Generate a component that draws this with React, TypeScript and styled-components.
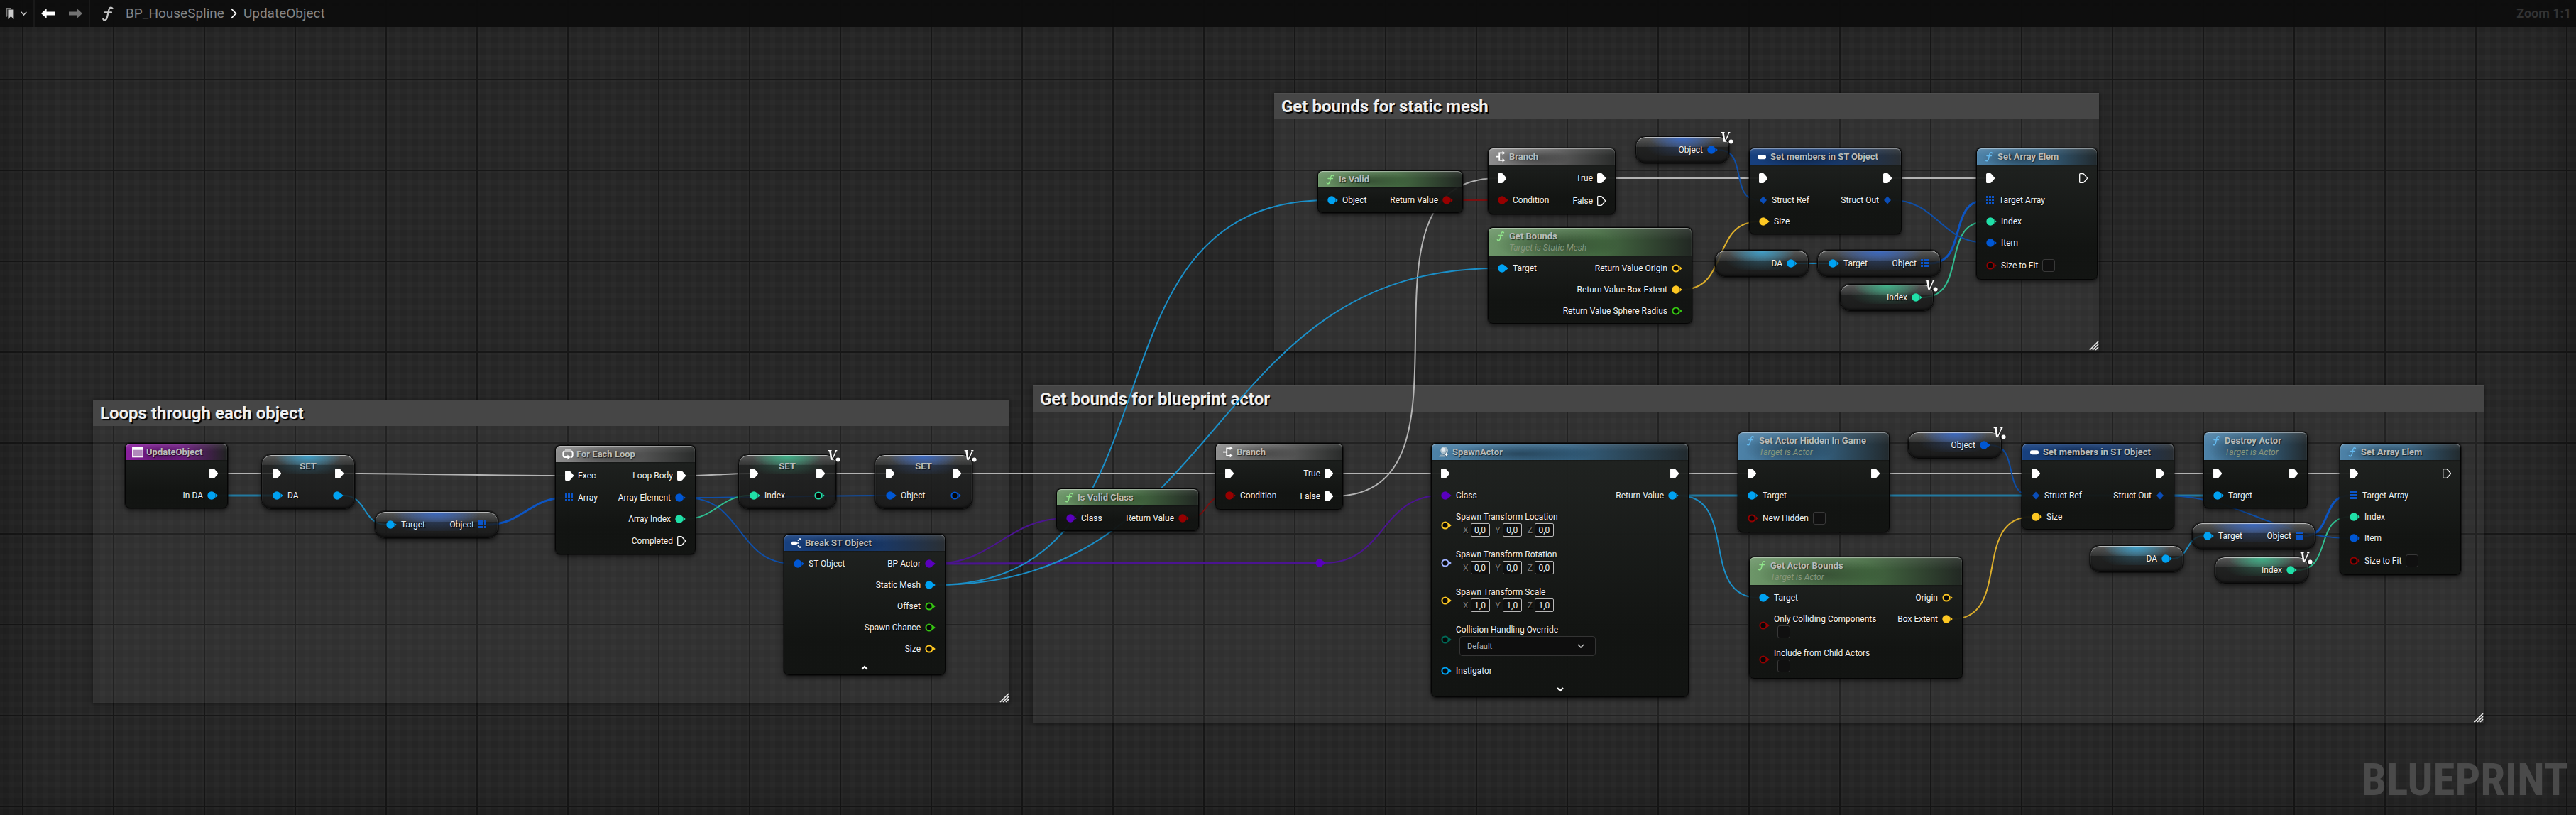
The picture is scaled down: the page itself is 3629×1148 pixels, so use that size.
import React, { useId } from 'react';
import styled, { createGlobalStyle, css } from 'styled-components';

/* ---------- palette ---------- */

const C = {
  exec: '#ffffff',
  object: '#00a2f2',
  struct: '#0057d4',
  cls: '#5a00bd',
  int: '#20e0a8',
  bool: '#960000',
  vector: '#fdc722',
  float: '#36c412',
  rotator: '#9fb2ff',
  enum: '#006a58',
};

type Theme = 'event' | 'gray' | 'blue' | 'func' | 'pure';

const themes: Record<Theme, { a: string; b: string; c: string; f: string }> = {
  event: { a: '#8a1f9e', b: '#6d1c80', c: '#202321', f: '#ffffff' },
  gray: { a: '#8e8e8e', b: '#5a5a5a', c: '#2a2c2b', f: '#ffffff' },
  blue: { a: '#17407f', b: '#17396d', c: '#2a2f34', f: '#ffffff' },
  func: { a: '#4d82a8', b: '#34607f', c: '#222a2e', f: '#63b9ee' },
  pure: { a: '#6d9669', b: '#456b42', c: '#222823', f: '#8fe58a' },
};

/* ---------- page ---------- */

const Global = createGlobalStyle`
  * { box-sizing: border-box; }
  body { margin: 0; background: #252525; font-family: Roboto, "Noto Sans", sans-serif; }
`;

const Page = styled.div`
  display: flex;
  flex-direction: column;
  min-height: 100vh;
  overflow: hidden;
  position: relative;
  background-color: #252525;
  background-image:
    linear-gradient(90deg, #171717 2px, transparent 2px),
    linear-gradient(#171717 2px, transparent 2px),
    linear-gradient(90deg, rgba(255, 255, 255, 0.012) 7px, transparent 7px),
    linear-gradient(rgba(255, 255, 255, 0.012) 7px, transparent 7px);
  background-size: 128px 128px, 128px 128px, 16px 16px, 16px 16px;
  background-position: 31px 0, 0 111px, 13px 0, 0 13px;
`;

const Toolbar = styled.header`
  display: flex;
  align-items: center;
  height: 38px;
  padding: 0 4px 0 8px;
  background: rgba(13, 13, 13, 0.94);
  position: relative;
  z-index: 3;
`;

const ToolGroup = styled.div`
  display: flex;
  gap: 20px;
`;

const ToolButton = styled.button<{ $w: number }>`
  display: flex;
  align-items: center;
  justify-content: center;
  gap: 9px;
  width: ${(p) => p.$w}px;
  height: 38px;
  padding: 0;
  border: 0;
  background: none;
`;

const Divider = styled.span`
  width: 2px;
  height: 38px;
  margin: 0 9px;
  background: #191919;
`;

const Crumbs = styled.nav`
  display: flex;
  align-items: center;
  gap: 9px;
  padding-left: 7px;
`;

const FunctionMark = styled.svg`
  width: 18px;
  height: 22px;
  margin-right: 7px;
`;

const Crumb = styled.a`
  font-size: 19px;
  line-height: 22px;
  color: #858585;
  text-decoration: none;
`;

const ZoomText = styled.span`
  margin-left: auto;
  padding-right: 3px;
  font-size: 18px;
  line-height: 22px;
  font-weight: 700;
  color: #333333;
`;

const Canvas = styled.main`
  position: relative;
  flex: 1;
  margin-top: -38px;
  box-shadow: inset 0 0 70px rgba(0, 0, 0, 0.35);
`;

const Watermark = styled.div`
  position: absolute;
  right: 11px;
  bottom: 12px;
  font-family: "Roboto Condensed", "Liberation Sans Narrow", Roboto, sans-serif;
  font-size: 63px;
  line-height: 74px;
  font-weight: 700;
  color: #4a4a4a;
`;

/* ---------- comments and wires ---------- */

const CommentBox = styled.section<{ $x: number; $y: number; $w: number; $h: number }>`
  position: absolute;
  left: ${(p) => p.$x}px;
  top: ${(p) => p.$y}px;
  width: ${(p) => p.$w}px;
  height: ${(p) => p.$h}px;
  display: flex;
  flex-direction: column;
  justify-content: space-between;
  background: rgba(255, 255, 255, 0.05);
  box-shadow: 0 1px 6px 2px rgba(0, 0, 0, 0.35);
`;

const CommentTitle = styled.h2`
  margin: 0;
  height: 37px;
  padding: 0 10px;
  background: #464646;
  box-shadow: inset 0 1px 0 #4f4f4f;
  font-size: 24px;
  line-height: 39px;
  font-weight: 700;
  color: #efefef;
  text-shadow: 2px 2px 1px #000000;
`;

const Grip = styled.svg`
  align-self: flex-end;
  width: 14px;
  height: 14px;
`;

const Wires = styled.svg`
  position: absolute;
  inset: 0;
  width: 100%;
  height: 100%;
  pointer-events: none;
`;

/* ---------- nodes ---------- */

interface Place { $x: number; $y: number; $w: number }

const placed = css<Place>`
  position: absolute;
  left: ${(p) => p.$x}px;
  top: ${(p) => p.$y}px;
  width: ${(p) => p.$w}px;
`;

const NodeBox = styled.article<Place>`
  ${placed}
  border: 1px solid #050505;
  border-radius: 7px;
  background: linear-gradient(rgba(32, 35, 33, 0.95), rgba(17, 19, 17, 0.96) 75%);
  box-shadow: 0 0 0 1px rgba(0, 0, 0, 0.35), 0 3px 7px rgba(0, 0, 0, 0.6);
`;

const NodeHeader = styled.header<{ $t: Theme }>`
  display: flex;
  gap: 4px;
  padding: 3px 9px;
  border-radius: 6px 6px 0 0;
  background:
    linear-gradient(rgba(255, 255, 255, 0.1), rgba(255, 255, 255, 0) 45%),
    radial-gradient(ellipse 30% 60% at 34% 62%, rgba(0, 0, 0, 0.34), rgba(0, 0, 0, 0)),
    linear-gradient(90deg, ${(p) => themes[p.$t].a}, ${(p) => themes[p.$t].b} 55%, ${(p) => themes[p.$t].c});
  box-shadow: inset 0 1px 1px rgba(255, 255, 255, 0.45), 0 1px 2px rgba(0, 0, 0, 0.3);
`;

const NodeIcon = styled.svg`
  flex: none;
  width: 16px;
  height: 17px;
`;

const NodeTitle = styled.h3`
  margin: 0;
  font-size: 13px;
  line-height: 17px;
  font-weight: 700;
  color: #b9bcba;
  white-space: nowrap;
  text-shadow: 1px 1px 1px rgba(0, 0, 0, 0.6);
`;

const NodeSub = styled.p`
  margin: 0;
  font-size: 12px;
  line-height: 16px;
  font-style: italic;
  color: #87977d;
  white-space: nowrap;
`;

const NodeBody = styled.div`
  display: flex;
  justify-content: space-between;
  padding: 3px 13px 2px;
`;

const Column = styled.div<{ $end?: boolean }>`
  display: flex;
  flex-direction: column;
  align-items: ${(p) => (p.$end ? 'flex-end' : 'flex-start')};
`;

const rowHeights = { exec: 32, data: 30, check: 34, checkBelow: 48, vector: 53, select: 58 };
type RowKind = keyof typeof rowHeights;

const PinRow = styled.div<{ $kind: RowKind }>`
  display: flex;
  align-items: center;
  gap: 6px;
  height: ${(p) => rowHeights[p.$kind]}px;
  font-size: 12px;
  line-height: 16px;
  color: #f2f2f2;
  white-space: nowrap;
  text-shadow: 1px 1px 1px rgba(0, 0, 0, 0.7);
`;

const PinSvg = styled.svg`
  flex: none;
  height: 14px;
`;

const Stack = styled.div`
  display: flex;
  flex-direction: column;
  align-self: flex-start;
  padding-top: 6px;
`;

const StackLabel = styled.label`
  line-height: 18px;
`;

const VectorFields = styled.div`
  display: flex;
  gap: 8px;
  padding-left: 10px;
`;

const AxisLabel = styled.label`
  display: flex;
  align-items: center;
  gap: 3px;
  color: #777777;
`;

const AxisInput = styled.input`
  width: 27px;
  height: 19px;
  padding: 0;
  border: 1px solid #b8b8b8;
  border-radius: 2px;
  background: #0f0f0f;
  color: #f0f0f0;
  font: 12px Roboto, sans-serif;
  text-align: center;
`;

const CheckLabel = styled.label`
  display: flex;
  align-items: center;
  gap: 6px;
`;

const Check = styled.input<{ $below?: boolean }>`
  appearance: none;
  width: 18px;
  height: 18px;
  margin: ${(p) => (p.$below ? '0 0 0 5px' : '0')};
  border: 1px solid #383838;
  border-radius: 3px;
  background: #101010;
`;

const SelectWrap = styled.div`
  display: grid;
  align-items: center;
  margin-left: 5px;
  & > * { grid-area: 1 / 1; }
`;

const Select = styled.select`
  appearance: none;
  width: 192px;
  height: 28px;
  padding: 0 10px;
  border: 1px solid #343434;
  border-radius: 4px;
  background: #0e0e0e;
  color: #b5b5b5;
  font: 11px Roboto, sans-serif;
`;

const SelectArrow = styled.svg`
  justify-self: end;
  width: 10px;
  height: 6px;
  margin-right: 16px;
  pointer-events: none;
`;

const Expand = styled.button`
  display: flex;
  align-items: center;
  justify-content: center;
  width: 100%;
  height: 19px;
  padding: 0;
  border: 0;
  background: none;
`;

/* compact nodes: variable getters and setters */

const CompactBox = styled.article<Place & { $glow: string }>`
  ${placed}
  display: flex;
  justify-content: space-between;
  padding: 3px 15px;
  border: 1px solid #080808;
  border-radius: 14px;
  background:
    radial-gradient(ellipse 36% 17px at 50% 2px, ${(p) => p.$glow}, transparent) no-repeat 0 0 / 100% 14px,
    linear-gradient(rgba(140, 140, 140, 0.5), rgba(90, 90, 90, 0.3)) no-repeat 0 0 / 100% 14px,
    radial-gradient(ellipse 40% 20px at 50% 12px, ${(p) => p.$glow}55, transparent) no-repeat 0 0 / 100% 27px,
    linear-gradient(rgba(34, 36, 35, 0.82), rgba(22, 22, 22, 0.82));
  box-shadow: inset 0 1px 1px rgba(255, 255, 255, 0.65), inset 0 -2px 3px rgba(0, 0, 0, 0.5), 0 0 0 1px rgba(0, 0, 0, 0.4),
    0 3px 7px rgba(0, 0, 0, 0.6);
`;

const SetterBox = styled(CompactBox)`
  display: grid;
  grid-template-columns: minmax(0, 1fr) auto minmax(0, 1fr);
  padding: 7px 15px 3px;
`;

const SetterColumn = styled(Column)`
  padding-top: 3px;
`;

const Badge = styled.svg`
  position: absolute;
  right: -7px;
  top: -8px;
  width: 18px;
  height: 18px;
`;

/* ---------- drawings ---------- */

type PinKind = 'exec' | 'dot' | 'array' | 'diamond';

const PinIcon = ({ kind, color, open }: { kind: PinKind; color: string; open?: boolean }) => {
  if (kind === 'exec')
    return (
      <PinSvg width="12" viewBox="0 0 12 14">
        <path d="M1.6 .7H5.4Q6.3 .7 6.9 1.5L11.2 6.4Q11.6 7 11.2 7.6L6.9 12.5Q6.3 13.3 5.4 13.3H1.6Q.7 13.3.7 12.4V1.6Q.7.7 1.6.7Z"
          fill={open ? 'none' : color} stroke={color} strokeWidth="1.3" />
      </PinSvg>
    );
  if (kind === 'array')
    return (
      <PinSvg width="12" viewBox="0 0 12 14">
        {[0, 4, 8].map((x) => [1, 5, 9].map((y) => <rect key={`${x}-${y}`} x={x} y={y} width="3" height="3" fill={color} />))}
      </PinSvg>
    );
  if (kind === 'diamond')
    return (
      <PinSvg width="12" viewBox="0 0 12 14">
        <path d="M6 1.6L11 7 6 12.4 1 7Z" fill="#0a4db8" />
      </PinSvg>
    );
  return (
    <PinSvg width="15" viewBox="0 0 15 14">
      {open ? <circle cx="6" cy="7" r="4.6" fill="#070707" stroke={color} strokeWidth="2" /> : <circle cx="6" cy="7" r="5.7" fill={color} />}
      <path d="M11.3 4L14.8 7 11.3 10Q12.6 7 11.3 4Z" fill={color} />
    </PinSvg>
  );
};

const FPath = ({ color }: { color: string }) => (
  <g fill="none" stroke={color} strokeWidth="1.5" strokeLinecap="round">
    <path d="M12.4 3.6Q11 2 9.6 3.4 8.9 4.3 8.3 7.6L7.5 11.4Q6.8 14.6 5.2 14.8 3.8 14.9 3.4 13.8" />
    <path d="M5 7.4H11.4" />
  </g>
);

type IconName = 'event' | 'f' | 'loop' | 'branch' | 'break' | 'make' | 'spawn';

const HeaderIcon = ({ name, theme }: { name: IconName; theme: Theme }) => (
  <NodeIcon viewBox="0 0 16 17">
    {name === 'f' && <FPath color={themes[theme].f} />}
    {name === 'event' && (
      <>
        <rect x=".7" y="1.7" width="14.6" height="14" fill="#b088bb" stroke="#fff" strokeWidth="1.2" />
        <rect x=".7" y="1.7" width="14.6" height="4" fill="#fff" />
      </>
    )}
    {name === 'loop' && (
      <g fill="none" stroke="#fff" strokeWidth="2">
        <path d="M3.6 4.6Q1.4 4.8 1.4 7V10.6Q1.4 13 3.8 13H8" />
        <path d="M12.4 4.6Q14.6 4.8 14.6 7V10.6Q14.6 13 12.2 13H11.6" />
        <path d="M5 1.6V5.6M7 1.6V5M9 1.6V5M11 1.6V5.6" strokeWidth="1" />
        <path d="M7.4 9.4L11.4 13 7.4 16.6Z" fill="#fff" stroke="none" />
      </g>
    )}
    {name === 'branch' && (
      <g fill="none" stroke="#fff" strokeWidth="1.8">
        <path d="M1 8.6H5.6M11.6 3.4H6.2V13.8H11.6" />
        <path d="M10.6.8L14.6 3.4 10.6 6ZM10.6 11.2L14.6 13.8 10.6 16.4Z" fill="#fff" stroke="none" />
      </g>
    )}
    {name === 'break' && (
      <>
        <rect x="1" y="6.8" width="8" height="4.4" rx="1.8" fill="#fff" />
        <path d="M9.8 5.6L12.6 3.4M9.8 12.4L12.6 14.6M9 9H11" stroke="#fff" strokeWidth="1.4" />
        <path d="M11.4 2.2H14V5ZM11.4 15.8H14V13Z" fill="#fff" />
      </>
    )}
    {name === 'make' && <rect x="2" y="6.2" width="12" height="6" rx="2.4" fill="#fff" />}
    {name === 'spawn' && (
      <>
        <path d="M1 15.4L3.4 12.6H11L9.6 15.4Z" fill="#8fa7b8" />
        <circle cx="8.6" cy="6.6" r="5.4" fill="#a9bdc9" />
        <circle cx="7.2" cy="5.2" r="2.6" fill="#dfe8ee" />
        <path d="M11.6 7.6L12.7 10.9 16 12 12.7 13.1 11.6 16.4 10.5 13.1 7.2 12 10.5 10.9Z" fill="#fff" stroke="#35546b" strokeWidth=".6" />
      </>
    )}
  </NodeIcon>
);

const VariableBadge = () => (
  <Badge viewBox="0 0 18 18">
    <path d="M.6 1.6H5.6M10.2 1.6H13.4" stroke="#fff" strokeWidth="1.2" />
    <path d="M3.4 1.6L5.4 14.6" stroke="#fff" strokeWidth="2.6" />
    <path d="M11.8 1.8Q9.4 8.6 5.8 15" fill="none" stroke="#fff" strokeWidth="1.4" />
    <circle cx="14.6" cy="14.6" r="3" fill="#fff" />
  </Badge>
);

/* ---------- node description ---------- */

interface Pin {
  label?: string;
  kind?: PinKind;
  color?: string;
  open?: boolean;
  row?: RowKind;
  values?: string[];
}

const exec = (label = '', open = false): Pin => ({ label, kind: 'exec', color: C.exec, open, row: 'exec' });
const dot = (label: string, color: string, open = false): Pin => ({ label, color, open });
const arr = (label: string): Pin => ({ label, kind: 'array', color: '#0b55c9' });
const dia = (label: string): Pin => ({ label, kind: 'diamond', color: C.struct });

const PinControl = ({ pin }: { pin: Pin }) => {
  const id = useId();
  if (pin.row === 'check')
    return (
      <CheckLabel>
        {pin.label}
        <Check type="checkbox" />
      </CheckLabel>
    );
  if (pin.row === 'checkBelow')
    return (
      <Stack>
        <StackLabel htmlFor={id}>{pin.label}</StackLabel>
        <Check id={id} type="checkbox" $below />
      </Stack>
    );
  if (pin.row === 'vector')
    return (
      <Stack>
        <StackLabel as="span">{pin.label}</StackLabel>
        <VectorFields>
          {['X', 'Y', 'Z'].map((axis, i) => (
            <AxisLabel key={axis}>
              {axis}
              <AxisInput defaultValue={pin.values?.[i]} />
            </AxisLabel>
          ))}
        </VectorFields>
      </Stack>
    );
  if (pin.row === 'select')
    return (
      <Stack>
        <StackLabel htmlFor={id}>{pin.label}</StackLabel>
        <SelectWrap>
          <Select id={id}>
            <option>Default</option>
          </Select>
          <SelectArrow viewBox="0 0 10 6">
            <path d="M1 1L5 5 9 1" fill="none" stroke="#c8c8c8" strokeWidth="1.6" />
          </SelectArrow>
        </SelectWrap>
      </Stack>
    );
  return pin.label ? <span>{pin.label}</span> : null;
};

const PinList = ({ pins, end }: { pins: Pin[]; end?: boolean }) => (
  <>
    {pins.map((pin, i) => (
      <PinRow key={i} $kind={pin.row ?? 'data'}>
        {end && <PinControl pin={pin} />}
        <PinIcon kind={pin.kind ?? 'dot'} color={pin.color ?? C.object} open={pin.open} />
        {!end && <PinControl pin={pin} />}
      </PinRow>
    ))}
  </>
);

interface GraphNodeProps {
  x: number;
  y: number;
  w: number;
  theme: Theme;
  icon: IconName;
  title: string;
  sub?: string;
  left?: Pin[];
  right?: Pin[];
  expand?: 'up' | 'down';
}

const GraphNode = ({ x, y, w, theme, icon, title, sub, left = [], right = [], expand }: GraphNodeProps) => (
  <NodeBox $x={x} $y={y} $w={w}>
    <NodeHeader $t={theme}>
      <HeaderIcon name={icon} theme={theme} />
      <div>
        <NodeTitle>{title}</NodeTitle>
        {sub && <NodeSub>{sub}</NodeSub>}
      </div>
    </NodeHeader>
    <NodeBody>
      <Column><PinList pins={left} /></Column>
      <Column $end><PinList pins={right} end /></Column>
    </NodeBody>
    {expand && (
      <Expand aria-label={expand === 'up' ? 'Collapse' : 'Expand'}>
        <svg width="10" height="7" viewBox="0 0 10 7">
          <path d={expand === 'up' ? 'M1 6L5 2 9 6' : 'M1 1L5 5 9 1'} fill="none" stroke="#fff" strokeWidth="2.2" />
        </svg>
      </Expand>
    )}
  </NodeBox>
);

interface CompactProps {
  x: number;
  y: number;
  w?: number;
  glow: string;
  left?: Pin[];
  right: Pin[];
  badge?: boolean;
}

const Getter = ({ x, y, w = 132, glow, left = [], right, badge }: CompactProps) => (
  <CompactBox $x={x} $y={y} $w={w} $glow={glow}>
    <Column><PinList pins={left} /></Column>
    <Column $end><PinList pins={right} end /></Column>
    {badge && <VariableBadge />}
  </CompactBox>
);

const Setter = ({ x, y, w = 138, glow, left = [], right, badge }: CompactProps) => (
  <SetterBox $x={x} $y={y} $w={w} $glow={glow}>
    <SetterColumn><PinList pins={left} /></SetterColumn>
    <NodeTitle>SET</NodeTitle>
    <SetterColumn $end><PinList pins={right} end /></SetterColumn>
    {badge && <VariableBadge />}
  </SetterBox>
);

const GLOW = { cyan: '#3f9cc4', blue: '#3c68bd', green: '#3fae86' };

/* ---------- wires ---------- */

type Wire = [number, number, number, number, string, number?];

const W = {
  exec: '#b4b4b4',
  object: '#1b8fc8',
  flat: '#22799f',
  struct: '#0f4fa8',
  array: '#0d55c2',
  cls: '#4b1491',
  int: '#30bd90',
  bool: '#7a1010',
  vector: '#dcae2c',
};

const wires: Wire[] = [
  [307, 667, 384, 667, W.exec],
  [484, 667, 796, 670, W.exec],
  [966, 670, 1056, 667, W.exec],
  [1162, 667, 1248, 667, W.exec],
  [1354, 667, 1726, 667, W.exec],
  [1878, 667, 2030, 667, W.exec],
  [2365, 667, 2462, 667, W.exec],
  [2648, 667, 2862, 667, W.exec],
  [3049, 667, 3118, 667, W.exec],
  [3237, 667, 3310, 667, W.exec],
  [1878, 699, 2110, 251, W.exec],
  [2262, 251, 2478, 251, W.exec],
  [2665, 251, 2798, 251, W.exec],
  [306, 698, 384, 698, W.flat, 3],
  [484, 698, 544, 739, W.object],
  [686, 739, 796, 701, W.array, 3],
  [966, 701, 1248, 698, W.struct],
  [966, 701, 1118, 794, W.struct],
  [966, 731, 1056, 698, W.int],
  [1317, 794, 1502, 730, W.cls],
  [1317, 794, 1854, 793, W.cls, 3],
  [1866, 793, 2030, 698, W.cls],
  [1317, 824, 1870, 282, W.object],
  [1317, 824, 2110, 378, W.object],
  [1674, 730, 1726, 698, W.bool],
  [2046, 282, 2110, 282, W.bool],
  [2421, 211, 2478, 282, W.struct],
  [2369, 408, 2478, 312, W.vector],
  [2532, 371, 2576, 371, W.object],
  [2718, 371, 2798, 282, W.array, 3],
  [2708, 419, 2798, 312, W.int],
  [2665, 282, 2798, 342, W.struct],
  [2365, 698, 3118, 698, W.flat, 3],
  [2365, 698, 2478, 842, W.object],
  [2750, 872, 2862, 728, W.vector],
  [2804, 627, 2862, 698, W.struct],
  [3060, 787, 3104, 755, W.object],
  [3246, 755, 3310, 698, W.array, 3],
  [3236, 803, 3310, 728, W.int],
  [3049, 698, 3310, 758, W.struct],
];

/* Tangent length grows with the distance between the pins on both axes. */
const wirePath = ([x1, y1, x2, y2]: Wire) => {
  const h = (Math.min(Math.abs(x2 - x1), 1000) + Math.min(Math.abs(y2 - y1), 1000)) / 3;
  return `M${x1} ${y1}C${x1 + h} ${y1} ${x2 - h} ${y2} ${x2} ${y2}`;
};

interface CommentProps { x: number; y: number; w: number; h: number; title: string }

const Comment = ({ x, y, w, h, title }: CommentProps) => (
  <CommentBox $x={x} $y={y} $w={w} $h={h}>
    <CommentTitle>{title}</CommentTitle>
    <Grip viewBox="0 0 14 14">
      <path d="M1 13L13 1M5 13L13 5M9 13L13 9" stroke="#ececec" strokeWidth="1.7" />
    </Grip>
  </CommentBox>
);

const zero = ['0,0', '0,0', '0,0'];
const one = ['1,0', '1,0', '1,0'];

export default function App() {
  return (
    <Page>
      <Global />
      <Toolbar>
        <ToolButton $w={30} aria-label="Bookmarks">
          <svg width="12" height="18" viewBox="0 0 12 18">
            <path d="M0 1H8V3H2.4V13L0 15Z" fill="#7a7a7a" />
            <path d="M3.4 3.4H11.4V17L7.4 13 3.4 17Z" fill="#c9c9c9" />
          </svg>
          <svg width="9" height="6" viewBox="0 0 9 6">
            <path d="M.7.8L4.5 5 8.3.8" fill="none" stroke="#c9c9c9" strokeWidth="1.5" />
          </svg>
        </ToolButton>
        <Divider />
        <ToolGroup>
          <ToolButton $w={19} aria-label="Back">
            <svg width="19" height="14" viewBox="0 0 19 14">
              <path d="M0 7L7.6 0V4.4H19V9.6H7.6V14Z" fill="#ffffff" />
            </svg>
          </ToolButton>
          <ToolButton $w={19} aria-label="Forward">
            <svg width="19" height="14" viewBox="0 0 19 14">
              <path d="M19 7L11.4 0V4.4H0V9.6H11.4V14Z" fill="#727272" />
            </svg>
          </ToolButton>
        </ToolGroup>
        <Divider />
        <Crumbs>
          <FunctionMark viewBox="2 1 12 15">
            <FPath color="#c4c4c4" />
          </FunctionMark>
          <Crumb href="#">BP_HouseSpline</Crumb>
          <svg width="9" height="16" viewBox="0 0 9 16">
            <path d="M1 1.4L7.4 8 1 14.6" fill="none" stroke="#f0f0f0" strokeWidth="1.8" />
          </svg>
          <Crumb href="#">UpdateObject</Crumb>
        </Crumbs>
        <ZoomText>Zoom 1:1</ZoomText>
      </Toolbar>

      <Canvas>
        <Watermark>BLUEPRINT</Watermark>

        <Comment x={131} y={563} w={1291} h={427} title="Loops through each object" />
        <Comment x={1455} y={543} w={2044} h={475} title="Get bounds for blueprint actor" />
        <Comment x={1795} y={131} w={1162} h={363} title="Get bounds for static mesh" />

        <Wires>
          {wires.map((wire, i) => (
            <path key={i} d={wirePath(wire)} fill="none" stroke={wire[4]} strokeWidth={wire[5] ?? 2} />
          ))}
          <circle cx="1859" cy="793" r="5.5" fill={C.cls} />
          <path d="M1864 790L1867.500 793 1864 796Z" fill={C.cls} />
        </Wires>

        {/* Loops through each object */}
        <GraphNode x={176} y={624} w={145} theme="event" icon="event" title="UpdateObject"
          right={[exec(), dot('In DA', C.object)]} />
        <Setter x={368} y={640} w={132} glow={GLOW.cyan}
          left={[exec(), dot('DA', C.object)]} right={[exec(), dot('', C.object)]} />
        <Getter x={528} y={720} w={174} glow={GLOW.blue} left={[dot('Target', C.object)]} right={[arr('Object')]} />
        <GraphNode x={782} y={627} w={198} theme="gray" icon="loop" title="For Each Loop"
          left={[exec('Exec'), arr('Array')]}
          right={[exec('Loop Body'), dot('Array Element', C.struct), dot('Array Index', C.int), exec('Completed', true)]} />
        <Setter x={1040} y={640} glow={GLOW.green} badge
          left={[exec(), dot('Index', C.int)]} right={[exec(), dot('', C.int, true)]} />
        <Setter x={1232} y={640} glow={GLOW.blue} badge
          left={[exec(), dot('Object', C.struct)]} right={[exec(), dot('', C.struct, true)]} />
        <GraphNode x={1104} y={752} w={228} theme="blue" icon="break" title="Break ST Object" expand="up"
          left={[dot('ST Object', C.struct)]}
          right={[dot('BP Actor', C.cls), dot('Static Mesh', C.object), dot('Offset', C.float, true), dot('Spawn Chance', C.float, true), dot('Size', C.vector, true)]} />

        {/* Get bounds for blueprint actor */}
        <GraphNode x={1488} y={688} w={201} theme="pure" icon="f" title="Is Valid Class"
          left={[dot('Class', C.cls)]} right={[dot('Return Value', C.bool)]} />
        <GraphNode x={1712} y={624} w={180} theme="gray" icon="branch" title="Branch"
          left={[exec(), dot('Condition', C.bool)]} right={[exec('True'), exec('False')]} />
        <GraphNode x={2016} y={624} w={363} theme="func" icon="spawn" title="SpawnActor" expand="down"
          left={[
            exec(),
            dot('Class', C.cls),
            { label: 'Spawn Transform Location', color: C.vector, open: true, row: 'vector', values: zero },
            { label: 'Spawn Transform Rotation', color: C.rotator, open: true, row: 'vector', values: zero },
            { label: 'Spawn Transform Scale', color: C.vector, open: true, row: 'vector', values: one },
            { label: 'Collision Handling Override', color: C.enum, open: true, row: 'select' },
            dot('Instigator', C.object, true),
          ]}
          right={[exec(), dot('Return Value', C.object)]} />
        <GraphNode x={2448} y={608} w={214} theme="func" icon="f" title="Set Actor Hidden In Game" sub="Target is Actor"
          left={[exec(), dot('Target', C.object), { label: 'New Hidden', color: C.bool, open: true, row: 'check' }]}
          right={[exec()]} />
        <Getter x={2688} y={608} glow={GLOW.blue} badge right={[dot('Object', C.struct)]} />
        <GraphNode x={2464} y={784} w={301} theme="pure" icon="f" title="Get Actor Bounds" sub="Target is Actor"
          left={[
            dot('Target', C.object),
            { label: 'Only Colliding Components', color: C.bool, open: true, row: 'checkBelow' },
            { label: 'Include from Child Actors', color: C.bool, open: true, row: 'checkBelow' },
          ]}
          right={[dot('Origin', C.vector, true), dot('Box Extent', C.vector)]} />
        <GraphNode x={2848} y={624} w={215} theme="blue" icon="make" title="Set members in ST Object"
          left={[exec(), dia('Struct Ref'), dot('Size', C.vector)]} right={[exec(), dia('Struct Out')]} />
        <GraphNode x={3104} y={608} w={147} theme="func" icon="f" title="Destroy Actor" sub="Target is Actor"
          left={[exec(), dot('Target', C.object)]} right={[exec()]} />
        <Getter x={2944} y={768} glow={GLOW.cyan} right={[dot('DA', C.object)]} />
        <Getter x={3088} y={736} w={174} glow={GLOW.blue} left={[dot('Target', C.object)]} right={[arr('Object')]} />
        <Getter x={3120} y={784} glow={GLOW.green} badge right={[dot('Index', C.int)]} />
        <GraphNode x={3296} y={624} w={171} theme="func" icon="f" title="Set Array Elem"
          left={[exec(), arr('Target Array'), dot('Index', C.int), dot('Item', C.struct), { label: 'Size to Fit', color: C.bool, open: true, row: 'check' }]}
          right={[exec('', true)]} />

        {/* Get bounds for static mesh */}
        <GraphNode x={1856} y={240} w={205} theme="pure" icon="f" title="Is Valid"
          left={[dot('Object', C.object)]} right={[dot('Return Value', C.bool)]} />
        <GraphNode x={2096} y={208} w={180} theme="gray" icon="branch" title="Branch"
          left={[exec(), dot('Condition', C.bool)]} right={[exec('True'), exec('False', true)]} />
        <GraphNode x={2096} y={320} w={288} theme="pure" icon="f" title="Get Bounds" sub="Target is Static Mesh"
          left={[dot('Target', C.object)]}
          right={[dot('Return Value Origin', C.vector, true), dot('Return Value Box Extent', C.vector), dot('Return Value Sphere Radius', C.float, true)]} />
        <Getter x={2304} y={192} glow={GLOW.blue} badge right={[dot('Object', C.struct)]} />
        <GraphNode x={2464} y={208} w={215} theme="blue" icon="make" title="Set members in ST Object"
          left={[exec(), dia('Struct Ref'), dot('Size', C.vector)]} right={[exec(), dia('Struct Out')]} />
        <Getter x={2416} y={352} glow={GLOW.cyan} right={[dot('DA', C.object)]} />
        <Getter x={2560} y={352} w={174} glow={GLOW.blue} left={[dot('Target', C.object)]} right={[arr('Object')]} />
        <Getter x={2592} y={400} glow={GLOW.green} badge right={[dot('Index', C.int)]} />
        <GraphNode x={2784} y={208} w={171} theme="func" icon="f" title="Set Array Elem"
          left={[exec(), arr('Target Array'), dot('Index', C.int), dot('Item', C.struct), { label: 'Size to Fit', color: C.bool, open: true, row: 'check' }]}
          right={[exec('', true)]} />
      </Canvas>
    </Page>
  );
}
